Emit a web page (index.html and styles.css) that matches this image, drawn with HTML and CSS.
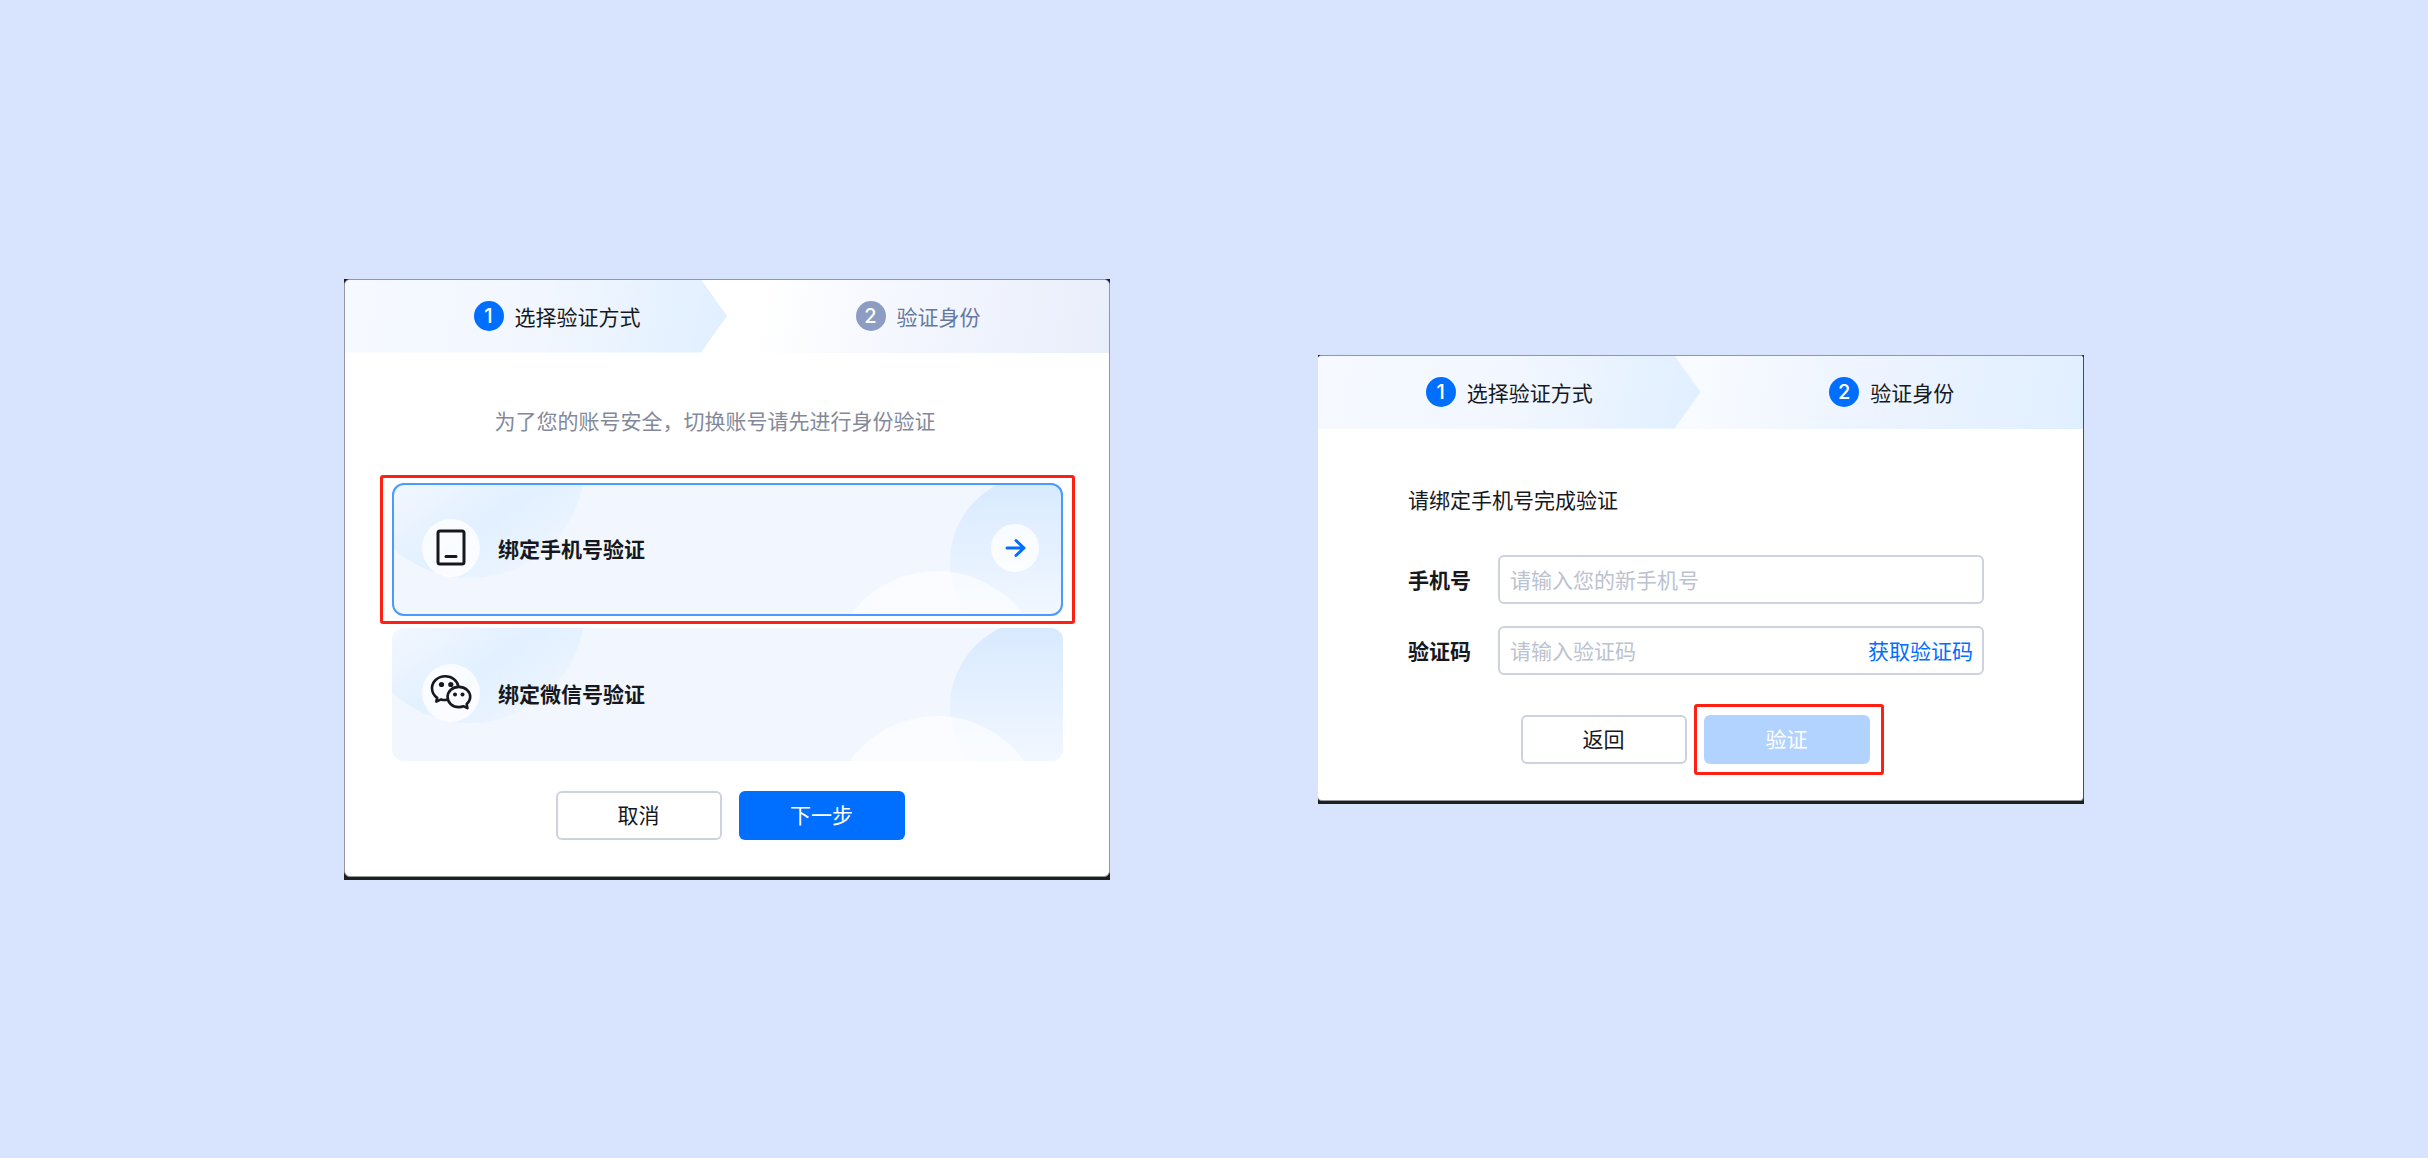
FILE: index.html
```html
<!DOCTYPE html>
<html lang="zh-CN">
<head>
	<meta charset="utf-8">
	<title>身份验证</title>
	<link rel="stylesheet" href="styles.css">
</head>
<body>
	<main class="page">
		<section class="dialog">
			<div class="dialog-inner">
				<ol class="steps">
					<li class="step step-first offset active"><span class="num">1</span>选择验证方式</li>
					<li class="step step-last"><span class="num">2</span>验证身份</li>
				</ol>
				<p class="tip">为了您的账号安全，切换账号请先进行身份验证</p>
				<div class="options">
					<div class="mark mark-option">
						<button type="button" class="option selected">
							<span class="bubble"></span>
							<span class="option-icon">
								<svg width="42" height="42" viewBox="0 0 42 42" fill="none" stroke="#16181d" stroke-width="3">
									<rect x="8" y="4" width="26" height="33" rx="2"/>
									<path d="M16 29.500h10" stroke-linecap="round"/>
								</svg>
							</span>
							<span class="option-name">绑定手机号验证</span>
							<span class="option-go">
								<svg width="24" height="24" viewBox="0 0 24 24" fill="none" stroke="#006eff" stroke-width="3" stroke-linecap="round" stroke-linejoin="round">
									<path d="M4 12h17M13 4.500L21 12l-8 7.500"/>
								</svg>
							</span>
						</button>
					</div>
					<button type="button" class="option">
						<span class="bubble"></span>
						<span class="option-icon">
							<svg width="42" height="42" viewBox="0 0 42 42" fill="none" stroke="#16181d" stroke-width="2.600" stroke-linejoin="round">
								<path d="M28.500 14.800C27.500 8.500 22 4.300 15.300 4.300 7.800 4.300 2 9.600 2 16.300c0 4 2 7.300 5.200 9.600L6.300 29.600l4.800-2.200c1.900.6 4 .7 6 .4"/>
								<path d="M28.800 14.900c-6.300 0-11.200 4.300-11.200 10.100s4.900 10.100 11.200 10.100c1.700 0 3.200-.3 4.600-.9l4 1.900-.7-4c2.100-1.800 3.500-4.300 3.500-7.100 0-5.800-5-10.100-11.400-10.100z"/>
								<g fill="#16181d" stroke="none">
									<circle cx="11.500" cy="12.500" r="2.600"/>
									<circle cx="20.800" cy="12.500" r="2.600"/>
									<circle cx="25" cy="22.500" r="2"/>
									<circle cx="32.500" cy="22.500" r="2"/>
								</g>
							</svg>
						</span>
						<span class="option-name">绑定微信号验证</span>
					</button>
				</div>
				<div class="actions">
					<button type="button" class="btn">取消</button>
					<button type="button" class="btn btn-primary">下一步</button>
				</div>
			</div>
		</section>

		<section class="dialog dialog-bind">
			<form class="dialog-inner">
				<ol class="steps">
					<li class="step step-first active"><span class="num">1</span>选择验证方式</li>
					<li class="step step-last active"><span class="num">2</span>验证身份</li>
				</ol>
				<div class="fields">
					<p class="intro">请绑定手机号完成验证</p>
					<div class="field">
						<label for="phone">手机号</label>
						<div class="input-box">
							<input type="tel" id="phone" placeholder="请输入您的新手机号">
						</div>
					</div>
					<div class="field">
						<label for="code">验证码</label>
						<div class="input-box">
							<input type="text" id="code" placeholder="请输入验证码">
							<button type="button" class="get-code">获取验证码</button>
						</div>
					</div>
				</div>
				<div class="actions">
					<button type="button" class="btn">返回</button>
					<div class="mark mark-btn">
						<button type="submit" class="btn btn-primary" disabled>验证</button>
					</div>
				</div>
			</form>
		</section>
	</main>
</body>
</html>
```
FILE: styles.css
```css
* {
	box-sizing: border-box;
}
body {
	margin: 0;
	background: #d8e3fe;
	color: #16181d;
	font: 21px/28px "Noto Sans CJK SC", sans-serif;
}
button, input {
	font: inherit;
	color: inherit;
}
button {
	cursor: pointer;
}
svg {
	display: block;
}
.page {
	min-height: 100vh;
	display: flex;
	align-items: center;
	justify-content: center;
	gap: 208px;
}

/* dialog */
.dialog {
	flex: 0 1 766px;
	padding-bottom: 3px;
	background: #1d211e;
}
.dialog-inner {
	border: 1px solid #94989e;
	border-radius: 6px;
	background: #fff;
	overflow: hidden;
	padding-bottom: 36px;
}
.dialog-bind .dialog-inner {
	border-left: 0;
	border-right-color: #4a4e4c;
	border-radius: 4px;
	padding-bottom: 25px;
}

/* steps */
.steps {
	display: flex;
	height: 73px;
	margin: 0;
	padding: 0;
	list-style: none;
}
.step {
	flex: none;
	width: 50%;
	display: flex;
	align-items: center;
	justify-content: center;
	gap: 11px;
	color: #67789f;
}
.step.active {
	color: #16181d;
}
.step-first {
	background: linear-gradient(100deg, #f6f9ff, #f2f7ff 50%, #e0efff);
	clip-path: polygon(0 0, calc(100% - 26px) 0, 100% 50%, calc(100% - 26px) 100%, 0 100%);
}
.step-last {
	background: linear-gradient(100deg, #fff 10%, #f3f6fe 50%, #e9eefb);
}
.offset {
	padding-left: 42px;
}
.dialog-bind .steps {
	background: #f8fbff;
}
.step-last.active {
	background: linear-gradient(100deg, #f8fbff, #edf4ff 45%, #e0efff);
}
.num {
	width: 30px;
	height: 30px;
	border-radius: 50%;
	background: #8c9cc2;
	color: #fff;
	font: 500 20px/30px Inter, sans-serif;
	text-align: center;
}
.active .num {
	background: #006eff;
}

/* choose a method */
.tip {
	margin: 53px 24px 41px 0;
	text-align: center;
	color: #838999;
}
.options {
	display: flex;
	flex-direction: column;
	gap: 4px;
	padding: 0 34px 0 35px;
}
.options > .option {
	width: auto;
	margin: 0 12px;
}
.mark {
	border: 3px solid #ff2014;
	border-radius: 3px;
}
.mark-option {
	padding: 5px 9px;
}
.option {
	position: relative;
	isolation: isolate;
	display: flex;
	align-items: center;
	width: 100%;
	height: 133px;
	padding: 0 24px 2px 30px;
	border: 0;
	border-radius: 12px;
	background: #f2f7ff;
	overflow: hidden;
	text-align: left;
}
.selected {
	outline: 2px solid #4a9aff;
	outline-offset: -2px;
}

/* soft circles behind the option content */
.option::before, .option::after, .bubble {
	content: "";
	position: absolute;
	z-index: -2;
	border-radius: 50%;
}
.option::before {
	left: -37px;
	top: -135px;
	width: 230px;
	height: 230px;
	background: linear-gradient(145deg, #f2f7ff 42%, #e2f0ff 68%, #f2f7ff 98%);
}
.option::after {
	right: -61px;
	top: -8px;
	width: 174px;
	height: 174px;
	background: linear-gradient(#d7e9ff, #f3f8ff 85%);
}
.bubble {
	z-index: -1;
	right: 19px;
	top: 88px;
	width: 214px;
	height: 214px;
	background: rgba(255, 255, 255, .6);
}
.option-icon, .option-go {
	display: flex;
	align-items: center;
	justify-content: center;
	border-radius: 50%;
	background: rgba(255, 255, 255, .8);
}
.option-icon {
	width: 58px;
	height: 58px;
}
.option-go {
	width: 48px;
	height: 48px;
	margin-left: auto;
}
.option-name {
	margin-left: 18px;
	font-weight: 600;
}

/* buttons */
.actions {
	display: flex;
	align-items: center;
	justify-content: center;
	gap: 17px;
	margin-top: 30px;
	padding-left: 6px;
}
.btn {
	width: 166px;
	height: 49px;
	padding: 0 0 2px;
	border: 2px solid #cdd2de;
	border-radius: 6px;
	background: #fff;
}
.btn-primary {
	border: 0;
	background: #006eff;
	color: #fff;
}
.btn-primary:disabled {
	background: #b2d3ff;
	cursor: default;
}
.mark-btn {
	padding: 8px 11px 8px 7px;
}

/* bind phone */
.fields {
	padding: 0 99px 0 90px;
}
.intro {
	margin: 56px 0 42px;
}
.field {
	display: flex;
	align-items: center;
	margin-bottom: 22px;
}
.field label {
	width: 90px;
	font-weight: 600;
}
.input-box {
	flex: 1;
	display: flex;
	height: 49px;
	border: 2px solid #cdd2de;
	border-radius: 6px;
}
.input-box:focus-within {
	border-color: #006eff;
}
.input-box input {
	flex: 1;
	min-width: 0;
	padding: 0 10px;
	border: 0;
	outline: 0;
	background: none;
}
.input-box input::placeholder {
	color: #bcc2d0;
}
.get-code {
	padding: 0 9px;
	border: 0;
	background: none;
	color: #006eff;
}
.dialog-bind .actions {
	gap: 7px;
	margin-top: 29px;
	padding-left: 3px;
}
```
